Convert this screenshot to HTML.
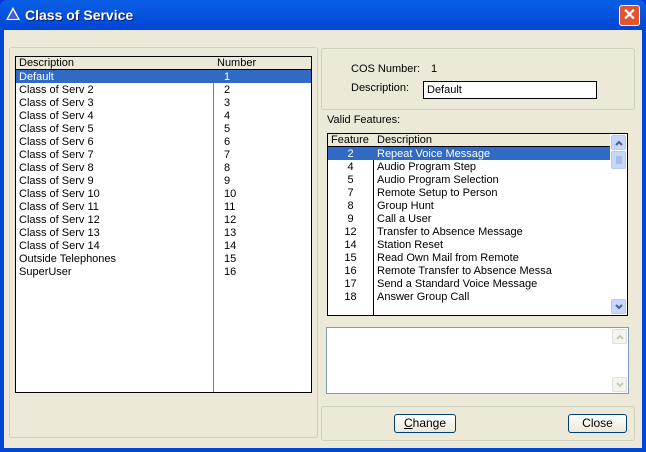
<!DOCTYPE html><html><head><style>
*{margin:0;padding:0;box-sizing:border-box}
body{width:646px;height:452px;overflow:hidden;background:#0831d9;font:11px "Liberation Sans",sans-serif;position:relative}
.win{position:absolute;left:0;top:0;width:646px;height:452px;background:linear-gradient(#0a5fe6,#0046d5 30px,#0046d5);border-radius:7px 7px 0 0}
.client{position:absolute;left:4px;top:30px;width:638px;height:418px;background:#ece9d8}
.title{position:absolute;left:25px;top:7px;color:#fff;font-weight:bold;font-size:14px;text-shadow:1px 1px #0a1e70}
.close{position:absolute;left:619px;top:5px;width:21px;height:21px;background:#e0552f;border:1px solid #fff;border-radius:3px;color:#fff;font-weight:bold;font-size:16px;text-align:center;line-height:19px}
.grp{position:absolute;border:1px solid #d0d0bf;border-radius:3px}
.a{position:absolute;white-space:nowrap}
.list{position:absolute;background:#fff;border:1px solid #000}
.row{height:13px;line-height:14px;position:relative}
.sel{background:#316ac5;color:#fff}
.hdr{height:13px;line-height:13px;border-bottom:1px solid #000;background:#ece9d8}
.btn{position:absolute;border:1px solid #003c74;border-radius:3px;background:linear-gradient(#fff,#ece9d8);text-align:center;line-height:16px;font-size:12px}
.sb{position:absolute;width:15px;height:15px;border:1px solid #b8c8f0;border-radius:2px;background:#c6d6fc}
.sb svg{position:absolute;left:3px;top:4px}
</style></head><body>
<div class="win"></div>
<svg style="position:absolute;left:5px;top:6px" width="16" height="16"><polygon points="8,1 15,14 1,14" fill="#fff"/><polygon points="8,4 13,13 3,13" fill="#4a5ad8"/></svg>
<div class="title">Class of Service</div>
<div class="close">✕</div>
<div class="client"></div>
<div class="grp" style="left:9px;top:47px;width:309px;height:391px"></div>
<div class="list" style="left:15px;top:56px;width:297px;height:337px">
<div style="position:absolute;left:197px;top:0;bottom:0;border-left:1px solid #808080"></div>
<div class="row hdr"><span class="a" style="left:3px">Description</span><span class="a" style="left:201px">Number</span></div>
<div id="L"></div>
</div>
<div class="grp" style="left:321px;top:48px;width:314px;height:62px"></div>
<div class="a" style="left:351px;top:63px">COS Number:</div><div class="a" style="left:431px;top:63px">1</div>
<div class="a" style="left:351px;top:82px">Description:</div>
<div style="position:absolute;left:423px;top:81px;width:174px;height:18px;border:1px solid #000;background:#fff;padding-left:3px;line-height:17px">Default</div>
<div class="a" style="left:327px;top:114px">Valid Features:</div>
<div class="list" style="left:327px;top:133px;width:301px;height:183px">
<div style="position:absolute;left:45px;top:0;bottom:0;border-left:1px solid #000"></div>
<div class="row hdr" style="width:282px"><span class="a" style="left:3px">Feature</span><span class="a" style="left:49px">Description</span></div>
<div id="F" style="width:282px"></div>
<div class="sb" style="left:283px;top:1px"><svg width="8" height="6"><polyline points="1,5 4,2 7,5" fill="none" stroke="#4d6185" stroke-width="2"/></svg></div>
<div class="sb" style="left:283px;top:17px;height:18px"><svg width="8" height="8" style="top:4px"><path d="M1 1h6M1 3h6M1 5h6M1 7h6" stroke="#8aa0d8"/></svg></div>
<div class="sb" style="left:283px;top:165px"><svg width="8" height="6"><polyline points="1,1 4,4 7,1" fill="none" stroke="#4d6185" stroke-width="2"/></svg></div>
</div>
<div style="position:absolute;left:326px;top:327px;width:303px;height:67px;background:#fff;border:1px solid #7f9db9">
<div class="sb" style="left:285px;top:1px;background:#f4f3ee;border-color:#e0e0d8"><svg width="8" height="6"><polyline points="1,5 4,2 7,5" fill="none" stroke="#c9c7ba" stroke-width="2"/></svg></div>
<div class="sb" style="left:285px;top:49px;background:#f4f3ee;border-color:#e0e0d8"><svg width="8" height="6"><polyline points="1,1 4,4 7,1" fill="none" stroke="#c9c7ba" stroke-width="2"/></svg></div></div>
<div class="grp" style="left:321px;top:406px;width:314px;height:35px"></div>
<div class="btn" style="left:394px;top:414px;width:62px;height:19px"><u>C</u>hange</div>
<div class="btn" style="left:568px;top:414px;width:59px;height:19px">Close</div>
<script>
var L=[["Default","1"]];for(var i=2;i<=14;i++)L.push(["Class of Serv "+i,""+i]);L.push(["Outside Telephones","15"],["SuperUser","16"]);
var h="";L.forEach(function(r,i){h+='<div class="row'+(i==0?' sel':'')+'" style="width:295px"><span class="a" style="left:3px">'+r[0]+'</span><span class="a" style="left:208px">'+r[1]+'</span></div>'});document.getElementById("L").innerHTML=h;
var F=[["2","Repeat Voice Message"],["4","Audio Program Step"],["5","Audio Program Selection"],["7","Remote Setup to Person"],["8","Group Hunt"],["9","Call a User"],["12","Transfer to Absence Message"],["14","Station Reset"],["15","Read Own Mail from Remote"],["16","Remote Transfer to Absence Messa"],["17","Send a Standard Voice Message"],["18","Answer Group Call"]];
h="";F.forEach(function(r,i){h+='<div class="row'+(i==0?' sel':'')+'"><span class="a" style="left:0;width:45px;text-align:center">'+r[0]+'</span><span class="a" style="left:49px">'+r[1]+'</span></div>'});document.getElementById("F").innerHTML=h;
</script>
</body></html>
